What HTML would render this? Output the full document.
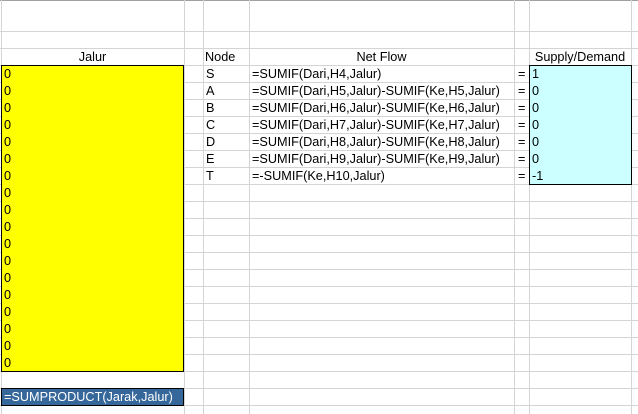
<!DOCTYPE html>
<html><head><style>
body{margin:0;width:638px;height:414px;overflow:hidden;background:#fff;position:relative;font-family:"Liberation Sans",Arial,sans-serif;font-size:12.7px;color:#000}
.v{position:absolute;top:0;width:1px;height:414px;background:#d4d4d4}
.h{position:absolute;left:0;height:1px;width:638px;background:#d4d4d4}
.t{position:absolute;height:17px;line-height:18px;white-space:nowrap}
</style></head><body>
<div class="h" style="top:0;background:#a0a0a0"></div>
<div class="h" style="top:31px"></div>
<div class="h" style="top:48px"></div>
<script>
for(let y=65;y<414;y+=17)document.write('<div class="h" style="top:'+y+'px"></div>');
</script>
<div class="v" style="left:1px"></div>
<div class="v" style="left:184px"></div>
<div class="v" style="left:203px"></div>
<div class="v" style="left:249px"></div>
<div class="v" style="left:514px"></div>
<div class="v" style="left:529px"></div>
<div class="v" style="left:631px"></div>

<div style="position:absolute;left:1px;top:65px;width:181px;height:305px;background:#ff0;border:1px solid #000"></div>
<div style="position:absolute;left:529px;top:65px;width:101px;height:118px;background:#cff;border:1px solid #000"></div>
<div style="position:absolute;left:1px;top:388px;width:181px;height:16px;background:#35679a;border:1px solid #000"></div>

<div class="t" style="left:1px;width:183px;text-align:center;top:48px">Jalur</div>
<div class="t" style="left:205px;top:48px">Node</div>
<div class="t" style="left:249px;width:265px;text-align:center;top:48px">Net Flow</div>
<div class="t" style="left:529px;width:102px;text-align:center;top:48px">Supply/Demand</div>

<script>
for(let i=0;i<18;i++)document.write('<div class="t" style="left:4px;top:'+(65+i*17)+'px">0</div>');
const n=['S','A','B','C','D','E','T'];
const f=['=SUMIF(Dari,H4,Jalur)','=SUMIF(Dari,H5,Jalur)-SUMIF(Ke,H5,Jalur)','=SUMIF(Dari,H6,Jalur)-SUMIF(Ke,H6,Jalur)','=SUMIF(Dari,H7,Jalur)-SUMIF(Ke,H7,Jalur)','=SUMIF(Dari,H8,Jalur)-SUMIF(Ke,H8,Jalur)','=SUMIF(Dari,H9,Jalur)-SUMIF(Ke,H9,Jalur)','=-SUMIF(Ke,H10,Jalur)'];
const s=['1','0','0','0','0','0','-1'];
for(let i=0;i<7;i++){let y=65+i*17;
document.write('<div class="t" style="left:206px;top:'+y+'px">'+n[i]+'</div><div class="t" style="left:252px;top:'+y+'px">'+f[i]+'</div><div class="t" style="left:518px;top:'+y+'px">=</div><div class="t" style="left:532px;top:'+y+'px">'+s[i]+'</div>');}
</script>
<div class="t" style="left:4px;top:388px;color:#fff">=SUMPRODUCT(Jarak,Jalur)</div>
</body></html>
